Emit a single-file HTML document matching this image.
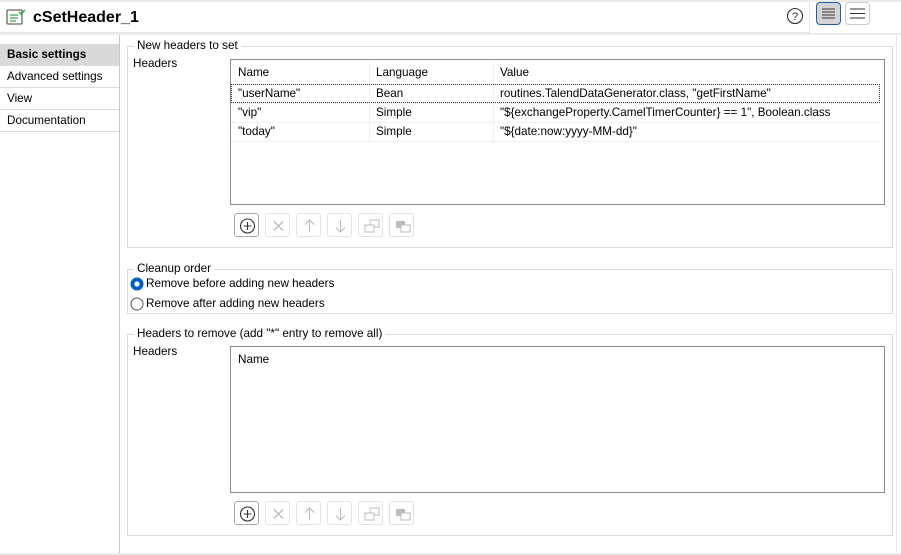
<!DOCTYPE html>
<html><head><meta charset="utf-8"><style>
*{box-sizing:border-box;margin:0;padding:0}
body{width:901px;height:555px;position:relative;background:#fff;font-family:"Liberation Sans",Arial,sans-serif;font-size:11.7px;color:#000;overflow:hidden}
.a{position:absolute}
.fs{position:absolute;border:1px solid #dcdcdc}
.lg{position:absolute;background:#fff;padding:0 3px;top:-8px;left:6px;line-height:14px}
.side div{position:absolute;left:0;width:119px;height:22px;border-bottom:1px solid #dcdcdc;padding-left:7px;line-height:21px}
.btn{position:absolute;width:25px;height:24px;border:1px solid #e3e3e3;border-radius:3px;background:#fff}
.btn svg{position:absolute;left:0;top:0}
.tbl{position:absolute;border:1px solid #8a8a8a;background:#fff}
.c{position:absolute;line-height:19px;white-space:nowrap}
</style></head><body>
<div class="a" style="left:0;top:0;width:901px;height:2px;background:#ececec"></div>
<div class="a" style="left:0;top:2px;width:810px;height:31px;background:#fff;border-right:1px solid #e6e6e6;border-bottom:1px solid #e6e6e6"></div>
<div class="a" style="left:810px;top:2px;width:91px;height:32px;background:#fff"></div>
<div class="a" style="left:0;top:33px;width:901px;height:2px;background:#ececec"></div>
<svg class="a" style="left:6px;top:8px" width="20" height="18" viewBox="0 0 20 18"><rect x="1" y="2" width="15" height="14" rx="1" fill="none" stroke="#666" stroke-width="1.3"/><path d="M4 7h8M4 10h8M4 13h6" stroke="#3aa04a" stroke-width="1.2"/><path d="M13 4l2 2 4-4" stroke="#2a9a3a" stroke-width="1.4" fill="none"/></svg>
<div class="a" style="left:33px;top:8px;font-size:16px;font-weight:bold;line-height:19px">cSetHeader_1</div>
<svg class="a" style="left:786px;top:7px" width="18" height="18" viewBox="0 0 18 18"><circle cx="9" cy="9" r="7.5" fill="none" stroke="#333" stroke-width="1.1"/><text x="9" y="13" font-size="11" text-anchor="middle" font-family="Liberation Sans" fill="#333">?</text></svg>
<div class="a" style="left:816px;top:2px;width:25px;height:23px;border:1px solid #1e5fa8;border-radius:4px;background:#d4d4d4"></div>
<svg class="a" style="left:816px;top:2px" width="25" height="23"><path d="M6 7h13M6 10h13M6 13h13M6 16h13" stroke="#333"/></svg>
<div class="a" style="left:845px;top:2px;width:25px;height:23px;border:1px solid #ccc;border-radius:4px;background:#fff"></div>
<svg class="a" style="left:845px;top:2px" width="25" height="23"><path d="M5 7h15M5 11.5h15M5 16h15" stroke="#333"/></svg>
<div class="side">
<div style="top:44px;background:#d9d9d9;font-weight:bold">Basic settings</div>
<div style="top:66px">Advanced settings</div>
<div style="top:88px">View</div>
<div style="top:110px">Documentation</div>
</div>
<div class="a" style="left:119px;top:35px;width:1px;height:518px;background:#c8c8c8"></div>
<div class="a" style="left:0;top:553px;width:901px;height:2px;background:#ececec"></div>
<div class="a" style="left:896px;top:35px;width:1px;height:518px;background:#e6e6e6"></div>

<div class="fs" style="left:127px;top:46px;width:766px;height:202px"><div class="lg">New headers to set</div></div>
<div class="a" style="left:133px;top:57px">Headers</div>
<div class="tbl" style="left:230px;top:59px;width:655px;height:146px">
<div class="a" style="left:138px;top:2px;width:1px;height:80px;background:#eef0f5"></div>
<div class="a" style="left:262px;top:2px;width:1px;height:80px;background:#eef0f5"></div>
<div class="a" style="left:0;top:43px;width:649px;height:1px;background:#eef0f5"></div>
<div class="a" style="left:0;top:62px;width:649px;height:1px;background:#eef0f5"></div>
<div class="a" style="left:0;top:81px;width:649px;height:1px;background:#eef0f5"></div>
<div class="a" style="left:0;top:24px;width:649px;height:19px;border:1px dotted #333"></div>
<div class="c" style="left:7px;top:3px">Name</div><div class="c" style="left:145px;top:3px">Language</div><div class="c" style="left:269px;top:3px">Value</div>
<div class="c" style="left:7px;top:24px">"userName"</div><div class="c" style="left:145px;top:24px">Bean</div><div class="c" style="left:269px;top:24px">routines.TalendDataGenerator.class, "getFirstName"</div>
<div class="c" style="left:7px;top:43px">"vip"</div><div class="c" style="left:145px;top:43px">Simple</div><div class="c" style="left:269px;top:43px">"${exchangeProperty.CamelTimerCounter} == 1", Boolean.class</div>
<div class="c" style="left:7px;top:62px">"today"</div><div class="c" style="left:145px;top:62px">Simple</div><div class="c" style="left:269px;top:62px">"${date:now:yyyy-MM-dd}"</div>
</div>

<div class="fs" style="left:127px;top:269px;width:766px;height:45px"><div class="lg">Cleanup order</div></div>
<svg class="a" style="left:130px;top:277px" width="14" height="14"><circle cx="7" cy="7" r="6.5" fill="#0060c0"/><circle cx="7" cy="7" r="2.6" fill="#fff"/></svg>
<div class="a" style="left:146px;top:277px;line-height:14px">Remove before adding new headers</div>
<svg class="a" style="left:130px;top:297px" width="14" height="14"><circle cx="7" cy="7" r="6" fill="#fff" stroke="#555"/></svg>
<div class="a" style="left:146px;top:297px;line-height:14px">Remove after adding new headers</div>

<div class="fs" style="left:127px;top:334px;width:766px;height:202px"><div class="lg">Headers to remove (add "*" entry to remove all)</div></div>
<div class="a" style="left:133px;top:345px">Headers</div>
<div class="tbl" style="left:230px;top:346px;width:655px;height:147px"><div class="c" style="left:7px;top:3px">Name</div></div>

<div id="b1"></div>
<script>
function btns(y){var s='';var xs=[234,265,296,327,358,389];
var ic=[
'<circle cx="12.5" cy="12" r="7" fill="none" stroke="#333" stroke-width="1.1"/><path d="M12.5 8v8M8.5 12h8" stroke="#333" stroke-width="1.1"/>',
'<path d="M8 7.5l9 9M17 7.5l-9 9" stroke="#bbb" stroke-width="1.3"/>',
'<path d="M12.5 18V6M8 10.5l4.5-4.5 4.5 4.5" stroke="#bbb" fill="none" stroke-width="1.1"/>',
'<path d="M12.5 6v12M8 13.5l4.5 4.5 4.5-4.5" stroke="#bbb" fill="none" stroke-width="1.1"/>',
'<rect x="11" y="6" width="9" height="7" fill="#fff" stroke="#bbb"/><rect x="6" y="11" width="9" height="7" fill="#fff" stroke="#bbb"/>',
'<rect x="6" y="7" width="9" height="7" fill="#bbb"/><rect x="11" y="11" width="9" height="7" fill="#fff" stroke="#bbb"/>'];
for(var i=0;i<6;i++)s+='<div class="btn" style="left:'+xs[i]+'px;top:'+y+'px;'+(i==0?'border-color:#aaa':'')+'"><svg width="25" height="24">'+ic[i]+'</svg></div>';return s;}
document.getElementById('b1').innerHTML=btns(213)+btns(501);
</script>
</body></html>
